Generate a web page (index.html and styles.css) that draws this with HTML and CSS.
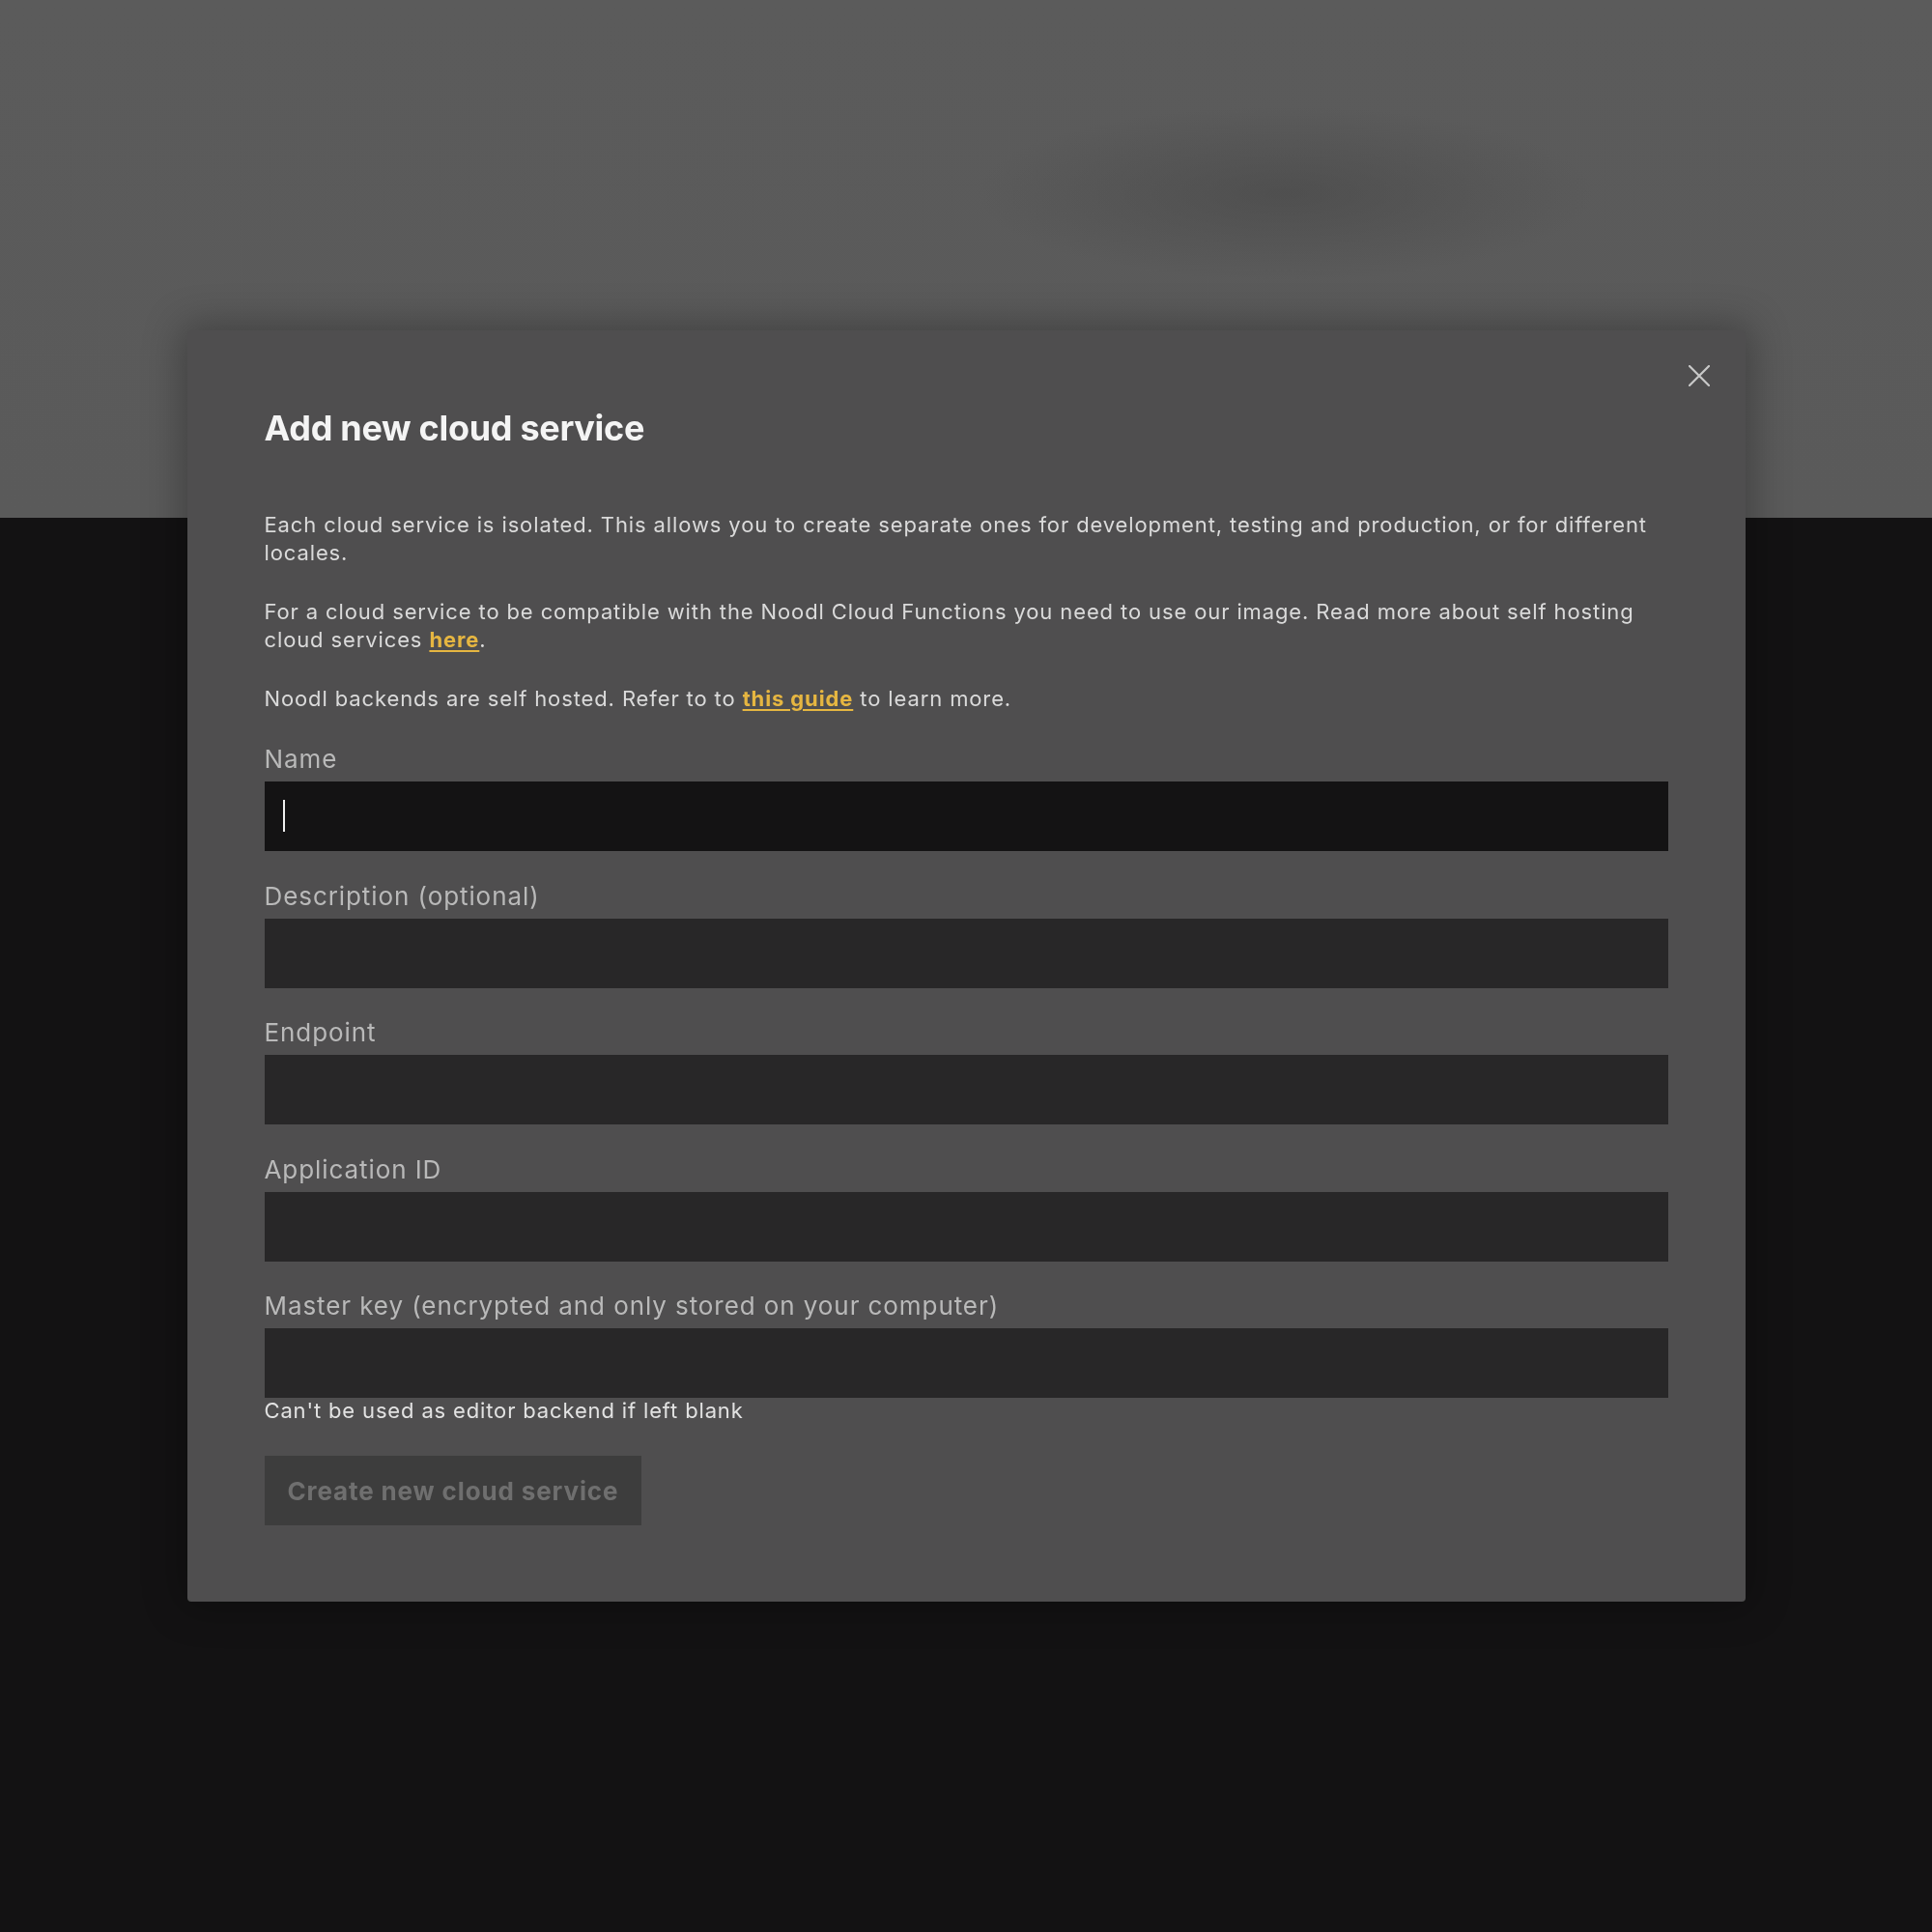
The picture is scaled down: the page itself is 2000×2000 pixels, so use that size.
FILE: index.html
```html
<!DOCTYPE html>
<html lang="en">
<head>
<meta charset="utf-8">
<title>Add new cloud service</title>
<link rel="stylesheet" href="styles.css">
</head>
<body>
<div class="app">
  <div class="app-top"></div>
  <div class="app-bottom"></div>
</div>
<div class="overlay">
  <div class="modal">
    <button class="close" aria-label="Close">
      <svg width="22" height="22" viewBox="0 0 22 22"><path d="M1 1 L21 21 M21 1 L1 21" stroke="#c9c9c9" stroke-width="2.2" fill="none" stroke-linecap="round"/></svg>
    </button>
    <h1 class="title">Add new cloud service</h1>
    <p class="text">Each cloud service is isolated. This allows you to create separate ones for development, testing and production, or for different locales.</p>
    <p class="text">For a cloud service to be compatible with the Noodl Cloud Functions you need to use our image. Read more about self hosting cloud services <a class="link" href="#">here</a>.</p>
    <p class="text">Noodl backends are self hosted. Refer to to <a class="link" href="#">this guide</a> to learn more.</p>
    <div class="fields">
      <div class="field">
        <label class="label">Name</label>
        <div class="input-wrap">
          <input class="input input-active" type="text">
          <span class="caret"></span>
        </div>
      </div>
      <div class="field">
        <label class="label">Description (optional)</label>
        <input class="input" type="text">
      </div>
      <div class="field">
        <label class="label">Endpoint</label>
        <input class="input" type="text">
      </div>
      <div class="field">
        <label class="label">Application ID</label>
        <input class="input" type="text">
      </div>
      <div class="field">
        <label class="label">Master key (encrypted and only stored on your computer)</label>
        <input class="input" type="text">
      </div>
    </div>
    <div class="helper">Can't be used as editor backend if left blank</div>
    <button class="primary" disabled>Create new cloud service</button>
  </div>
</div>
</body>
</html>
```
FILE: styles.css
```css
html, body {
  margin: 0;
  padding: 0;
  width: 2000px;
  height: 2000px;
  overflow: hidden;
  font-family: Inter, "Noto Sans", sans-serif;
}

.app {
  width: 2000px;
  height: 2000px;
  display: flex;
  flex-direction: column;
}

.app-top {
  height: 536px;
  background:
    radial-gradient(ellipse 320px 90px at 1330px 200px, rgba(70, 70, 70, 0.55), rgba(70, 70, 70, 0) 100%),
    linear-gradient(#5b5b5b, #5a5a5a);
}

.app-bottom {
  flex: 1;
  background: #131213;
}

.overlay {
  position: fixed;
  inset: 0;
  display: flex;
  align-items: center;
  justify-content: center;
}

.modal {
  position: relative;
  width: 1613px;
  box-sizing: border-box;
  padding: 79px 80px 79px 80px;
  background: #4f4e4f;
  box-shadow: 0 0 40px 6px rgba(0, 0, 0, 0.28);
  border-radius: 4px;
}

.close {
  position: absolute;
  top: 36px;
  right: 37px;
  width: 22px;
  height: 22px;
  padding: 0;
  border: 0;
  background: none;
  display: flex;
}

.title {
  margin: 0 0 64px 0;
  font-size: 36px;
  line-height: 44px;
  font-weight: 700;
  letter-spacing: -0.3px;
  color: #f4f4f4;
}

.text {
  margin: 0 0 32px 0;
  font-size: 22px;
  line-height: 29px;
  letter-spacing: 0.88px;
  color: #dadada;
}

.link {
  color: #e6b641;
  font-weight: 700;
  text-decoration: underline;
  text-underline-offset: 3px;
  text-decoration-thickness: 2px;
}

.fields {
  display: flex;
  flex-direction: column;
  gap: 30.5px;
}

.field {
  display: flex;
  flex-direction: column;
}

.label {
  font-size: 26px;
  line-height: 32px;
  letter-spacing: 0.92px;
  color: #b9b9b9;
  margin-bottom: 7px;
}

.input-wrap {
  position: relative;
  display: flex;
}

.input {
  box-sizing: border-box;
  width: 100%;
  height: 72px;
  margin: 0;
  border: 0;
  outline: none;
  padding: 0 16px;
  background: #282728;
  color: #ffffff;
  font-family: Inter, sans-serif;
  font-size: 22px;
}

.input-active {
  background: #141314;
}

.caret {
  position: absolute;
  left: 19px;
  top: 19px;
  width: 2px;
  height: 33px;
  background: #f0f0f0;
}

.helper {
  margin-top: -1px;
  font-size: 22px;
  line-height: 29px;
  letter-spacing: 0.85px;
  color: #e2e2e2;
}

.primary {
  margin-top: 32px;
  height: 72px;
  padding: 0 24px;
  border: 0;
  background: #3d3d3d;
  color: #6f6f6f;
  font-family: Inter, sans-serif;
  font-size: 26px;
  font-weight: 700;
  letter-spacing: 0.87px;
  display: block;
}
```
